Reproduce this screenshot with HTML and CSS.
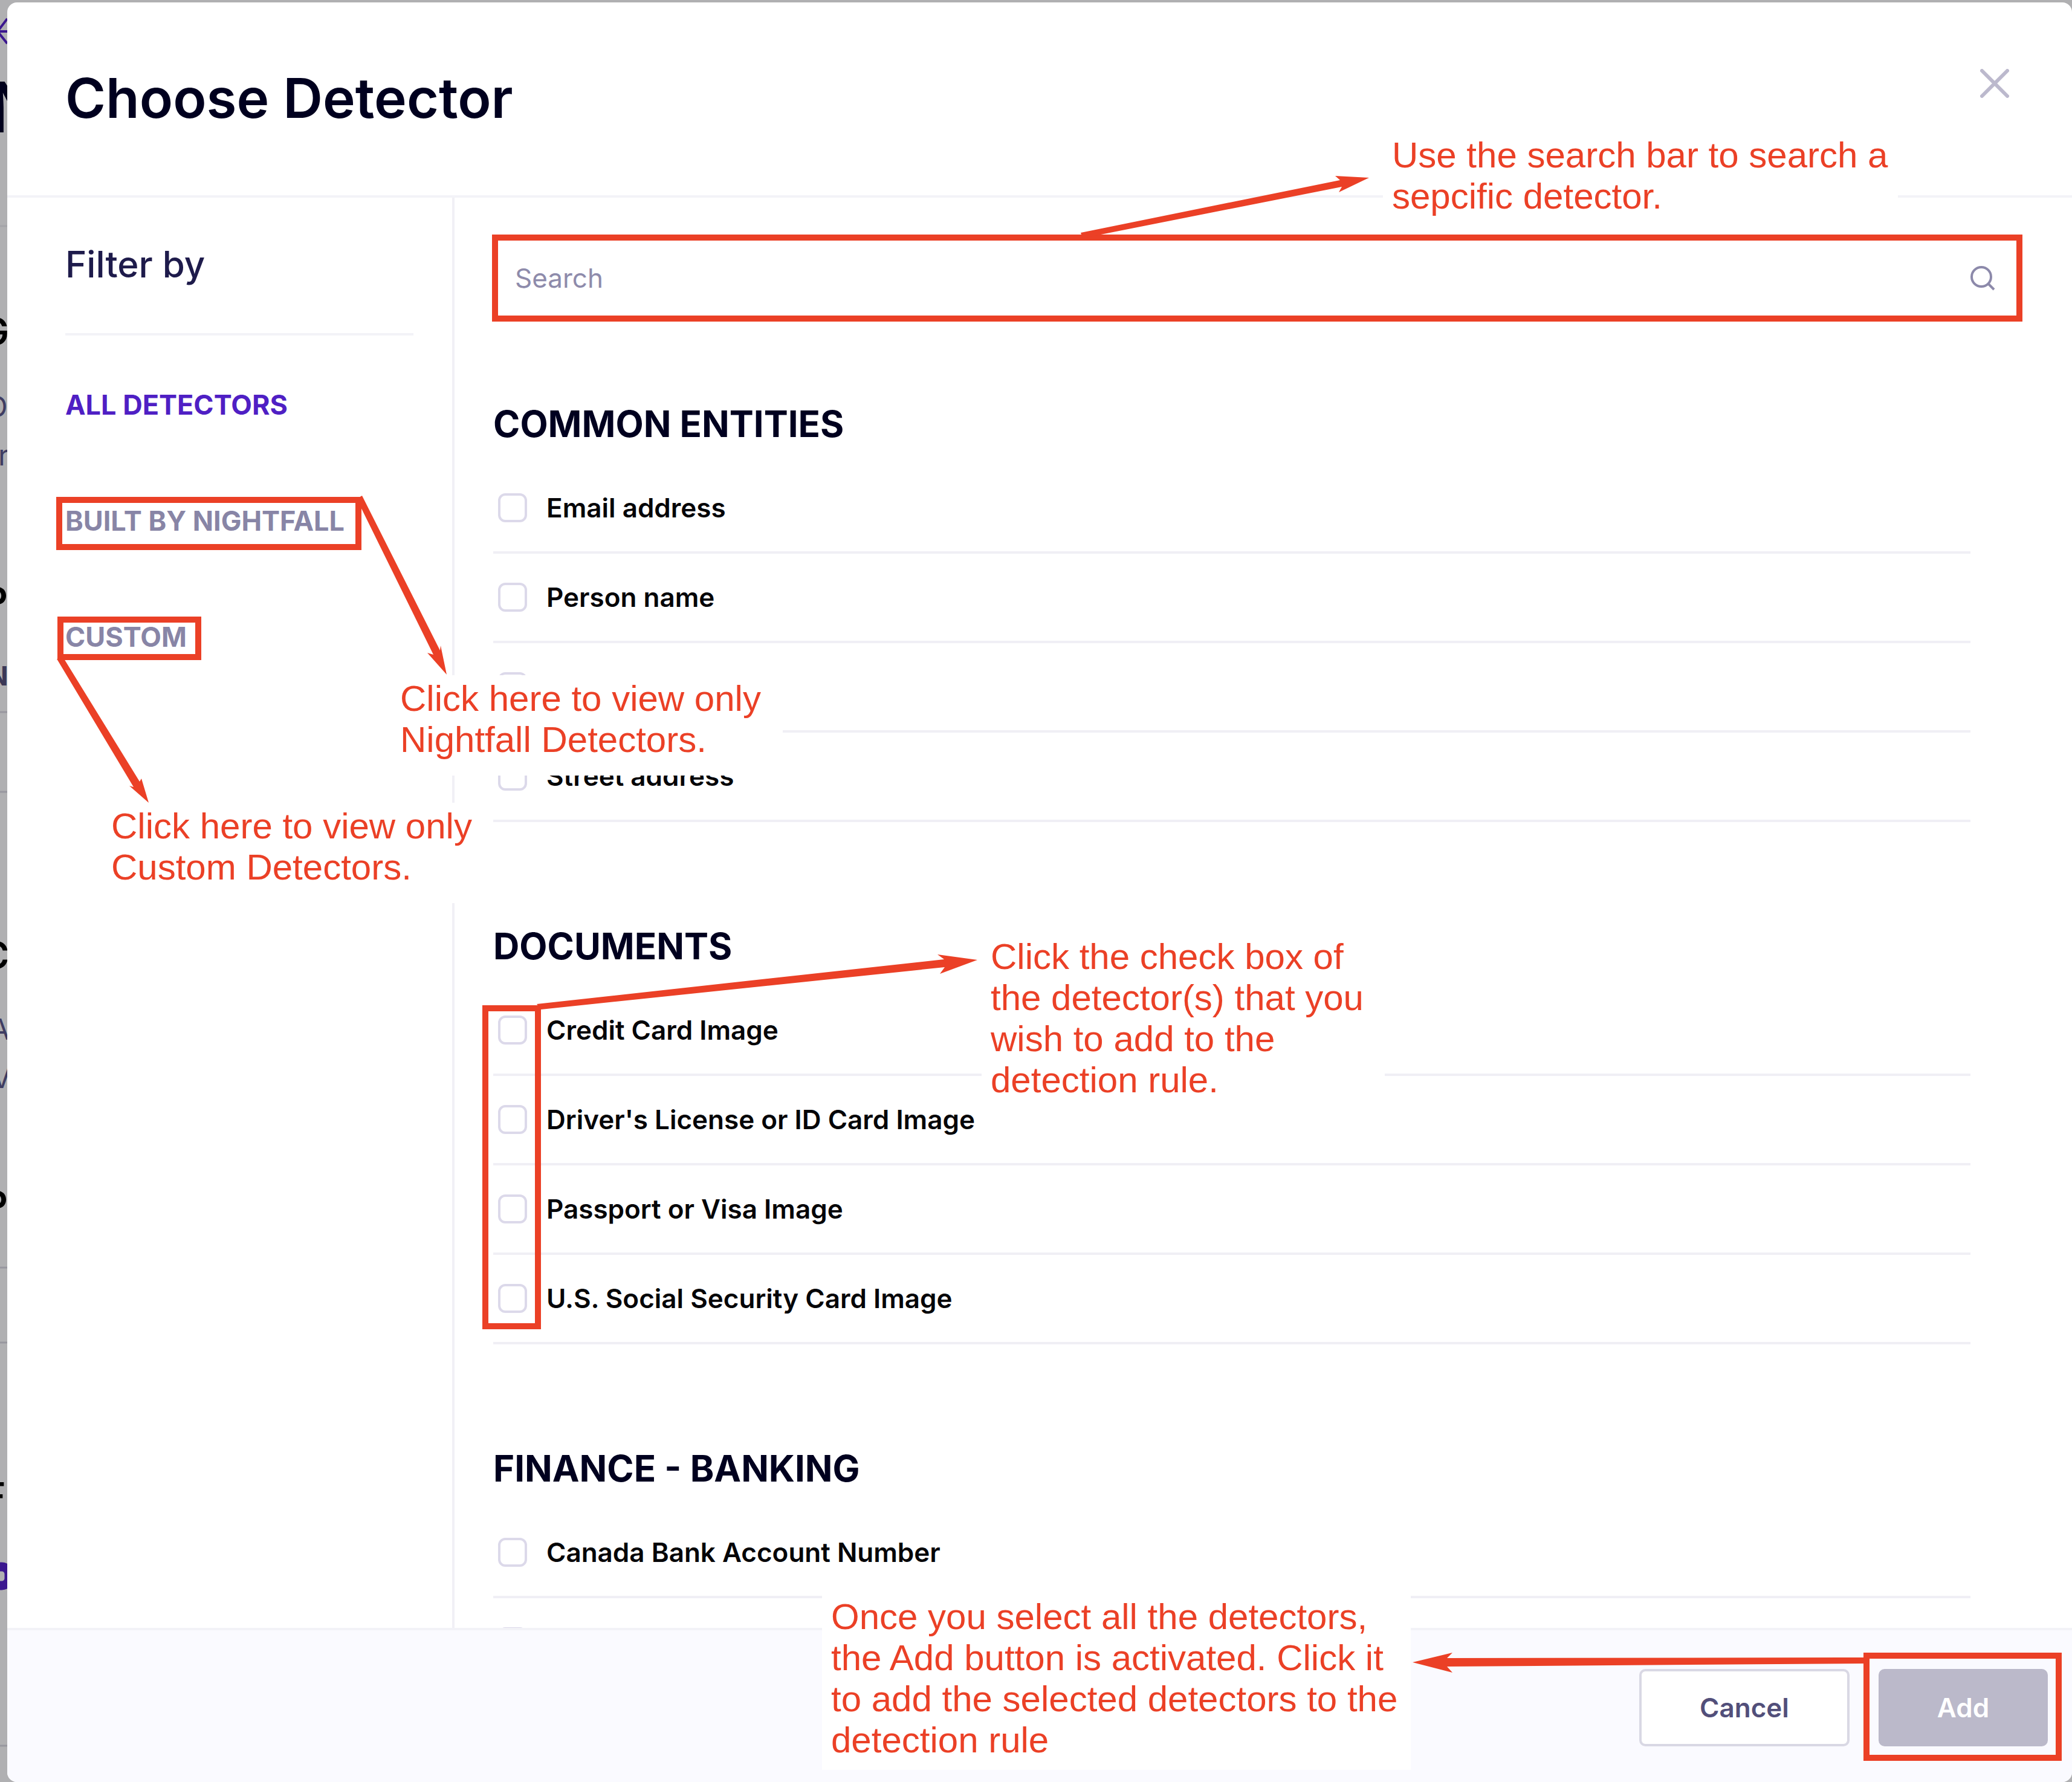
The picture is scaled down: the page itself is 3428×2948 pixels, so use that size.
FILE: index.html
```html
<!DOCTYPE html>
<html lang="en">
<head>
<meta charset="utf-8">
<title>Choose Detector</title>
<link rel="stylesheet" href="styles.css">
</head>
<body>
<svg class="backdrop" width="12" height="2948" viewBox="0 0 12 2948" aria-hidden="true">
  <path d="M12 31L-4 52L12 72M-4 52H12" fill="none" stroke="#3b178f" stroke-width="4"/>
  <g stroke="#98979f" stroke-width="3"><path d="M0 374H12" stroke="#a5a5a9"/><path d="M0 1178H12M0 1310H12M0 2097H12M0 2221H12M0 2888H12"/></g>
  <g class="backdrop-strong"><text x="-30" y="570">G</text><text x="-26" y="1015">P</text><text x="-29" y="1602">C</text><text x="-26" y="2014">P</text><text x="-26" y="2496">F</text></g>
  <text class="backdrop-title" x="-18" y="219">N</text>
  <g class="backdrop-soft"><text x="-22" y="690">D</text><text x="-3" y="770">r</text><text x="-17" y="1720">A</text><text x="-14" y="1800">V</text></g>
  <text class="backdrop-label" x="-20" y="1134">N</text>
  <rect x="-30" y="2592" width="45" height="31" rx="12" fill="none" stroke="#3b178f" stroke-width="15"/>
</svg>

<div class="modal" role="dialog" aria-labelledby="title">
  <header class="modal-header">
    <h1 id="title">Choose Detector</h1>
    <button class="close" type="button" aria-label="Close">
      <svg width="48" height="48" viewBox="0 0 48 48"><path d="M3 3L45 45M45 3L3 45" fill="none" stroke="#bcb9cd" stroke-width="6" stroke-linecap="round"/></svg>
    </button>
  </header>

  <div class="modal-body">
    <nav class="sidebar">
      <h2>Filter by</h2>
      <ul class="filters">
        <li><a class="active" href="#all">ALL DETECTORS</a></li>
        <li>
          <a href="#nightfall">BUILT BY NIGHTFALL</a>
          <span class="frame frame-nightfall"></span>
          <svg class="arrow" width="1" height="1"><path d="M482 -9L491 -14L620 242L621 234L631 282L599 246L609 249Z"/></svg>
          <p class="note note-nightfall">Click here to view only<br>Nightfall Detectors.</p>
        </li>
        <li>
          <a href="#custom">CUSTOM</a>
          <span class="frame frame-custom"></span>
          <svg class="arrow" width="1" height="1"><path d="M-14 64H-2L123 267L126 262L138 302L106 274L113 276Z"/></svg>
          <p class="note note-custom">Click here to view only<br>Custom Detectors.</p>
        </li>
      </ul>
    </nav>

    <main class="content">
      <div class="search">
        <input type="search" placeholder="Search" aria-label="Search detectors">
        <svg class="search-icon" width="44" height="44" viewBox="0 0 44 44"><g fill="none" stroke="#8c89aa" stroke-width="4"><circle cx="20" cy="20" r="16"/><path d="M32 32L41 41"/></g></svg>
        <span class="frame frame-search"></span>
        <svg class="arrow" width="1" height="1"><path d="M972 -5L1401 -92L1393 -99L1449 -96L1399 -72L1404 -81L975 4Z"/></svg>
        <p class="note note-search">Use the search bar to search a<br>sepcific detector.</p>
      </div>

      <div class="groups">
        <section>
          <h3>COMMON ENTITIES</h3>
          <ul class="rows">
            <li><label><input type="checkbox">Email address</label></li>
            <li><label><input type="checkbox">Person name</label></li>
            <li><label><input type="checkbox">Phone number</label></li>
            <li><label><input type="checkbox">Street address</label></li>
          </ul>
        </section>
        <section>
          <h3>DOCUMENTS</h3>
          <div class="marked">
            <ul class="rows">
              <li><label><input type="checkbox">Credit Card Image</label></li>
              <li><label><input type="checkbox">Driver's License or ID Card Image</label></li>
              <li><label><input type="checkbox">Passport or Visa Image</label></li>
              <li><label><input type="checkbox">U.S. Social Security Card Image</label></li>
            </ul>
            <span class="frame frame-boxes"></span>
            <svg class="arrow" width="1" height="1"><path d="M72 29L746 -45L735 -53L801 -44L739 -21L747 -32L79 38Z"/></svg>
            <p class="note note-boxes">Click the check box of<br>the detector(s) that you<br>wish to add to the<br>detection rule.</p>
          </div>
        </section>
        <section>
          <h3>FINANCE - BANKING</h3>
          <ul class="rows">
            <li><label><input type="checkbox">Canada Bank Account Number</label></li>
            <li><label><input type="checkbox" aria-label="Next detector"></label></li>
          </ul>
        </section>
      </div>
    </main>
  </div>

  <footer class="modal-footer">
    <button class="button" type="button">Cancel</button>
    <div class="marked">
      <button class="button button-primary" type="button">Add</button>
      <span class="frame frame-add"></span>
      <svg class="arrow" width="1" height="1"><path d="M-25 -19L-714 -18L-705 -27L-771 -11L-705 6L-714 -4L-25 -9Z"/></svg>
      <p class="note note-add">Once you select all the detectors,<br>the Add button is activated. Click it<br>to add the selected detectors to the<br>detection rule</p>
    </div>
  </footer>
</div>
</body>
</html>
```
FILE: styles.css
```css
* { box-sizing: border-box; }
body {
  margin: 0;
  padding: 4px 0 0 12px;
  height: 100vh;
  overflow: hidden;
  background: #b0b0b2;
  font-family: Inter, "Liberation Sans", sans-serif;
}
h1, h2, h3, p, ul { margin: 0; padding: 0; }
ul { list-style: none; }
button { font: inherit; }

/* page seen behind the dialog */
.backdrop { position: absolute; left: 0; top: 0; }
.backdrop-strong { font-size: 60px; font-weight: 600; fill: #000; }
.backdrop-title { font-size: 116px; font-weight: 600; fill: #00001c; }
.backdrop-soft { font-size: 48px; fill: #3f3d62; }
.backdrop-label { font-size: 44px; font-weight: 700; fill: #3b3856; }

.modal {
  display: flex;
  flex-direction: column;
  height: 100%;
  position: relative;
  background: #fff;
  border-radius: 16px;
}
.modal-header {
  display: flex;
  justify-content: space-between;
  align-items: flex-start;
  padding: 110px 104px 113px 96px;
  border-bottom: 4px solid #f3f3f8;
}
h1 { font-size: 91px; line-height: 96px; font-weight: 600; color: #00001f; }
.close { display: flex; padding: 0; border: 0; background: none; }

.modal-body { display: flex; flex: 1; min-height: 0; }
.sidebar {
  position: relative;
  z-index: 1;
  flex: none;
  width: 740px;
  padding: 78px 64px 0 96px;
  border-right: 4px solid #f1f0f6;
}
h2 {
  padding-bottom: 82px;
  border-bottom: 4px solid #f3f3f7;
  font-size: 60px;
  line-height: 64px;
  font-weight: 500;
  color: #1e1b4b;
}
.filters { display: grid; gap: 136px; padding-top: 87px; }
.filters li { position: relative; }
.filters a {
  display: block;
  font-size: 45px;
  line-height: 56px;
  font-weight: 700;
  color: #8885a6;
  text-decoration: none;
  white-space: nowrap;
}
.filters .active { color: #4f1fc4; }

.content {
  display: flex;
  flex-direction: column;
  flex: 1;
  min-width: 0;
  padding: 63px 84px 0 64px;
}
.search { position: relative; flex: none; display: flex; align-items: center; height: 140px; }
.search input {
  flex: 1;
  height: 100%;
  padding: 0 36px;
  border: 0;
  background: none;
  font: 400 44px/56px Inter, sans-serif;
  color: #1e1b4b;
}
.search input::placeholder { color: #8e8bab; opacity: 1; }
.search-icon { margin-right: 42px; }

.groups {
  display: flex;
  flex-direction: column;
  gap: 173px;
  flex: 1;
  min-height: 0;
  overflow: hidden;
  margin-left: -20px;
  padding: 139px 84px 0 20px;
}
.groups section { flex: none; }
h3 { margin-bottom: 35px; font-size: 60px; line-height: 64px; font-weight: 700; color: #00001f; }
.rows li { height: 148px; border-bottom: 4px solid #f0eff5; }
.rows label {
  display: flex;
  align-items: center;
  gap: 32px;
  height: 100%;
  padding-left: 8px;
  font-size: 44px;
  line-height: 56px;
  font-weight: 600;
  color: #050508;
}
.rows input {
  appearance: none;
  width: 48px;
  height: 48px;
  margin: 0;
  border: 4px solid #dcd9ea;
  border-radius: 12px;
  background: #fff;
}

.modal-footer {
  flex: none;
  display: flex;
  justify-content: flex-end;
  gap: 48px;
  padding: 64px 40px 59px;
  border-top: 4px solid #f2f2f7;
  border-radius: 0 0 16px 16px;
  background: #fafaff;
}
.button {
  display: block;
  width: 348px;
  height: 128px;
  border: 4px solid #d9d8e4;
  border-radius: 10px;
  background: #fff;
  font-size: 44px;
  font-weight: 600;
  color: #524f7a;
}
.button-primary { width: 280px; border-color: #bbb9ca; background: #bbb9ca; color: #fff; }

/* callouts */
.marked { position: relative; }
.frame { position: absolute; border: 10px solid #eb4026; pointer-events: none; }
.arrow { position: absolute; left: 0; top: 0; overflow: visible; fill: #eb4026; pointer-events: none; }
.note {
  position: absolute;
  padding: 5px 15px 25px;
  background: #fff;
  font: 400 60px/68px "Liberation Sans", Arial, sans-serif;
  color: #eb4026;
  white-space: nowrap;
}
.frame-search { inset: -2px; }
.frame-nightfall { left: -15px; top: -12px; width: 505px; height: 88px; }
.frame-custom { left: -13px; top: -6px; width: 238px; height: 72px; }
.frame-boxes { left: -18px; top: 31px; width: 97px; height: 536px; }
.frame-add { inset: -27px -23px -24px -25px; }
.note-search { left: 1472px; top: -172px; width: 852px; }
.note-nightfall { left: 539px; top: 283px; width: 648px; }
.note-custom { left: 61px; top: 302px; width: 638px; }
.note-boxes { left: 808px; top: -88px; width: 667px; }
.note-add { left: -1748px; top: -125px; width: 974px; padding-bottom: 15px; }
```
